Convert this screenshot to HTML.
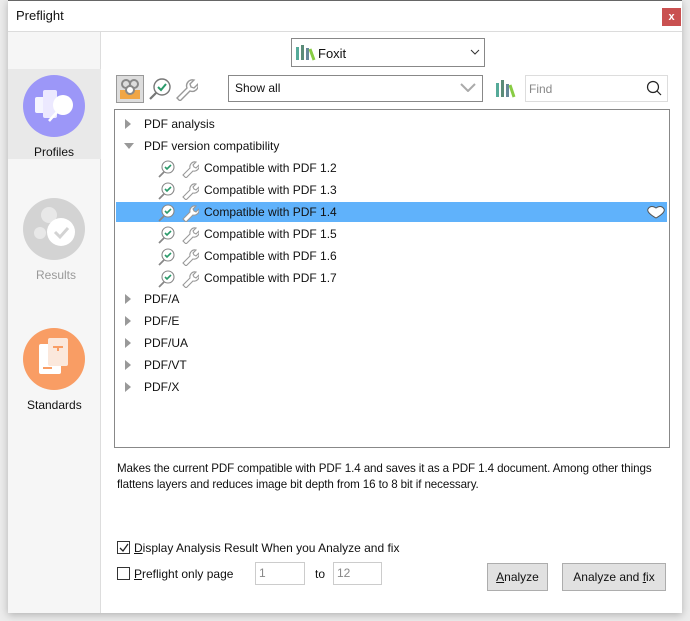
<!DOCTYPE html>
<html><head><style>
*{margin:0;padding:0;box-sizing:border-box}
body{width:690px;height:621px;background:#ececec;font-family:"Liberation Sans",sans-serif;font-size:12px;color:#111;position:relative;overflow:hidden}
.a{position:absolute}
.win{left:8px;top:0;width:674px;height:613px;background:#fff;border-top:1px solid #666;box-shadow:0 2px 8px rgba(0,0,0,.25)}
.t{white-space:nowrap}
.row{position:absolute;left:0;height:20px;line-height:20px;width:551px}
.tri{position:absolute;width:0;height:0}
.tr{border-top:5px solid transparent;border-bottom:5px solid transparent;border-left:6px solid #999}
.td{border-left:5px solid transparent;border-right:5px solid transparent;border-top:6px solid #999}
</style></head><body>
<div class="a win"></div>
<div class="a t" style="left:16px;top:8px;font-size:13px">Preflight</div>
<div class="a" style="left:662px;top:8px;width:19px;height:18px;background:#c95050;color:#fff;font-size:11px;font-weight:bold;text-align:center;line-height:18px">x</div>
<div class="a" style="left:8px;top:31px;width:674px;height:1px;background:#dcdcdc"></div>
<div class="a" style="left:8px;top:32px;width:93px;height:581px;background:#f6f6f6;border-right:1px solid #ddd"></div>
<div class="a" style="left:8px;top:69px;width:93px;height:90px;background:#e9e9e9"></div>
<svg class="a" style="left:23px;top:75px" width="62" height="62"><circle cx="31" cy="31" r="31" fill="#9c97f8"/><rect x="12" y="22" width="24" height="16" rx="2" fill="#fff" opacity=".9"/><rect x="20" y="15" width="14" height="28" rx="2" fill="#ece9ff"/><circle cx="40" cy="30" r="10" fill="#fff"/><line x1="34" y1="37" x2="26" y2="46" stroke="#fff" stroke-width="2.5"/></svg>
<div class="a t" style="left:34px;top:145px">Profiles</div>
<svg class="a" style="left:23px;top:198px" width="62" height="62"><circle cx="31" cy="31" r="31" fill="#d3d3d3"/><circle cx="26" cy="17" r="8" fill="#e8e8e8"/><circle cx="17" cy="35" r="6" fill="#e8e8e8"/><circle cx="38" cy="34" r="14" fill="#fff"/><path d="M32 34l5 5 8-9" stroke="#d3d3d3" stroke-width="3" fill="none"/></svg>
<div class="a t" style="left:36px;top:268px;color:#999">Results</div>
<svg class="a" style="left:23px;top:328px" width="62" height="62"><circle cx="31" cy="31" r="31" fill="#f99d64"/><rect x="16" y="16" width="22" height="30" rx="2" fill="#fff"/><rect x="25" y="10" width="20" height="28" rx="2" fill="#fbe8dc"/><path d="M30 19h10M35 19v4" stroke="#f99d64" stroke-width="2"/><path d="M20 40h9" stroke="#f99d64" stroke-width="2"/></svg>
<div class="a t" style="left:27px;top:398px">Standards</div>
<div class="a" style="left:291px;top:38px;width:194px;height:29px;border:1px solid #888"></div>
<svg class="a" style="left:296px;top:44px" width="20" height="17"><rect x="0" y="3" width="3" height="13" fill="#5a9"/><rect x="5" y="1" width="3" height="15" fill="#5b8c78"/><rect x="10" y="4" width="3" height="12" fill="#689"/><path d="M14 5l4 11" stroke="#8c4" stroke-width="3"/></svg>
<div class="a t" style="left:318px;top:46px;font-size:13px">Foxit</div>
<svg class="a" style="left:470px;top:49px" width="10" height="6"><path d="M1 1l4 4 4-4" stroke="#333" fill="none"/></svg>
<div class="a" style="left:116px;top:75px;width:28px;height:28px;background:#ddd;border:1px solid #999"></div>
<svg class="a" style="left:118px;top:77px" width="24" height="24"><rect x="2" y="13" width="20" height="9" fill="#f0a646"/><circle cx="8" cy="7" r="4" fill="none" stroke="#888" stroke-width="2"/><circle cx="16" cy="7" r="4" fill="none" stroke="#888" stroke-width="2"/><circle cx="12" cy="13" r="4" fill="#fff" stroke="#888" stroke-width="2"/></svg>
<svg class="a" style="left:148px;top:77px" width="24" height="24"><circle cx="14" cy="10" r="8" fill="#fff" stroke="#777" stroke-width="1.4"/><path d="M10 10l3 3 5-6" stroke="#2a9a6a" stroke-width="2" fill="none"/><path d="M8 16l-6 6" stroke="#777" stroke-width="2.2"/></svg>
<svg class="a" style="left:174px;top:77px" width="24" height="24"><path d="M3 21l10-10a6 6 0 0 1 7-8l-4 4 1 3 3 1 4-4a6 6 0 0 1-8 7L6 24z" fill="#fff" stroke="#999" stroke-width="1.4"/></svg>
<div class="a" style="left:228px;top:75px;width:255px;height:27px;border:1px solid #888"></div>
<div class="a t" style="left:235px;top:81px">Show all</div>
<svg class="a" style="left:460px;top:83px" width="16" height="9"><path d="M1 1l7 7 7-7" stroke="#aaa" stroke-width="2" fill="none"/></svg>
<svg class="a" style="left:496px;top:80px" width="20" height="18"><rect x="0" y="3" width="3" height="14" fill="#5a9"/><rect x="5" y="0" width="3" height="17" fill="#5b8c78"/><rect x="10" y="4" width="3" height="13" fill="#689"/><path d="M14 5l4 12" stroke="#8c4" stroke-width="3"/></svg>
<div class="a" style="left:525px;top:75px;width:143px;height:27px;border:1px solid #ddd"></div>
<div class="a t" style="left:529px;top:82px;color:#888">Find</div>
<svg class="a" style="left:646px;top:80px" width="16" height="16"><circle cx="7" cy="7" r="5.5" fill="none" stroke="#222" stroke-width="1.2"/><path d="M11 11l4 4" stroke="#222" stroke-width="1.2"/></svg>
<div class="a" style="left:114px;top:109px;width:556px;height:339px;border:1px solid #888"></div>
<div class="a" style="left:115px;top:110px;width:553px;height:337px">
 <div class="row" style="top:4px"><div class="tri tr" style="left:10px;top:5px"></div><span class="a t" style="left:29px">PDF analysis</span></div>
 <div class="row" style="top:26px"><div class="tri td" style="left:9px;top:7px"></div><span class="a t" style="left:29px">PDF version compatibility</span></div>
 <div class="row" style="top:92px;background:#60b2fb;width:551px;left:1px"></div>
 <div id="kids"></div>
 <svg class="a" style="left:532px;top:95px" width="18" height="14"><path d="M9 13C2 9 0 6 1 4s4-4 8-1c4-3 7-1 8 1s-1 5-8 9z" fill="#fff" stroke="#555"/></svg>
 <div class="row" style="top:179px"><div class="tri tr" style="left:10px;top:5px"></div><span class="a t" style="left:29px">PDF/A</span></div>
 <div class="row" style="top:201px"><div class="tri tr" style="left:10px;top:5px"></div><span class="a t" style="left:29px">PDF/E</span></div>
 <div class="row" style="top:223px"><div class="tri tr" style="left:10px;top:5px"></div><span class="a t" style="left:29px">PDF/UA</span></div>
 <div class="row" style="top:245px"><div class="tri tr" style="left:10px;top:5px"></div><span class="a t" style="left:29px">PDF/VT</span></div>
 <div class="row" style="top:267px"><div class="tri tr" style="left:10px;top:5px"></div><span class="a t" style="left:29px">PDF/X</span></div>
</div>
<script>
var h='';['1.2','1.3','1.4','1.5','1.6','1.7'].forEach(function(v,i){var t=48+i*22;
h+='<div class="row" style="top:'+t+'px"><svg class="a" style="left:43px;top:2px" width="18" height="18"><circle cx="10" cy="7" r="6" fill="#fff" stroke="#888" stroke-width="1.1"/><path d="M7 7l2 2 4-4" stroke="#2a9a6a" stroke-width="1.6" fill="none"/><path d="M6 12l-5 5" stroke="#888" stroke-width="1.8"/></svg><svg class="a" style="left:66px;top:2px" width="18" height="18"><path d="M2 15l7-7a5 5 0 0 1 6-6l-3 3 1 2 2 1 3-3a5 5 0 0 1-6 6l-7 7z" fill="#fff" stroke="#999" stroke-width="1.1"/></svg><span class="a t" style="left:89px">Compatible with PDF '+v+'</span></div>';});
document.getElementById('kids').outerHTML=h;
</script>
<div class="a" style="left:117px;top:461px;width:565px;line-height:16px;font-size:11.6px;letter-spacing:-0.1px">Makes the current PDF compatible with PDF 1.4 and saves it as a PDF 1.4 document. Among other things<br>flattens layers and reduces image bit depth from 16 to 8 bit if necessary.</div>
<div class="a" style="left:117px;top:541px;width:13px;height:13px;border:1px solid #333"></div>
<svg class="a" style="left:119px;top:543px" width="10" height="10"><path d="M1 5l3 3 5-7" stroke="#222" stroke-width="1.3" fill="none"/></svg>
<div class="a t" style="left:134px;top:541px"><u>D</u>isplay Analysis Result When you Analyze and fix</div>
<div class="a" style="left:117px;top:567px;width:13px;height:13px;border:1px solid #333"></div>
<div class="a t" style="left:134px;top:567px"><u>P</u>reflight only page</div>
<div class="a" style="left:255px;top:562px;width:50px;height:23px;border:1px solid #ccc"></div>
<div class="a t" style="left:259px;top:566px;color:#888">1</div>
<div class="a t" style="left:315px;top:567px">to</div>
<div class="a" style="left:333px;top:562px;width:49px;height:23px;border:1px solid #ccc"></div>
<div class="a t" style="left:337px;top:566px;color:#888">12</div>
<div class="a" style="left:487px;top:563px;width:61px;height:28px;background:#e1e1e1;border:1px solid #adadad;text-align:center;line-height:26px"><u>A</u>nalyze</div>
<div class="a" style="left:562px;top:563px;width:104px;height:28px;background:#e1e1e1;border:1px solid #adadad;text-align:center;line-height:26px">Analyze and <u>f</u>ix</div>
</body></html>
